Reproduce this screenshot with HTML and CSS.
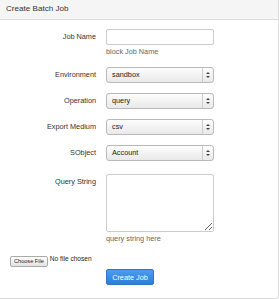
FILE: index.html
```html
<!DOCTYPE html>
<html lang="en">
<head>
  <meta charset="UTF-8">
  <title>Create Batch Job</title>
  <link rel="stylesheet" href="styles.css">
</head>
<body>
  <div class="panel">
    <div class="panel-heading">Create Batch Job</div>
    <form class="panel-body">
      <div class="form-group">
        <label for="jobName">Job Name</label>
        <div class="controls">
          <input type="text" id="jobName" class="field">
          <p class="help">block Job Name</p>
        </div>
      </div>

      <div class="form-group">
        <label>Environment</label>
        <div class="controls">
          <div class="select">sandbox<span class="arrows"></span></div>
        </div>
      </div>

      <div class="form-group">
        <label>Operation</label>
        <div class="controls">
          <div class="select">query<span class="arrows"></span></div>
        </div>
      </div>

      <div class="form-group">
        <label>Export Medium</label>
        <div class="controls">
          <div class="select">csv<span class="arrows"></span></div>
        </div>
      </div>

      <div class="form-group">
        <label>SObject</label>
        <div class="controls">
          <div class="select">Account<span class="arrows"></span></div>
        </div>
      </div>

      <div class="form-group query">
        <label for="query">Query String</label>
        <div class="controls">
          <textarea id="query" class="field area"></textarea>
          <p class="help">query string here</p>
        </div>
      </div>

      <div class="file-row">
        <span class="file-btn">Choose File</span>
        <span class="file-name">No file chosen</span>
      </div>

      <div class="form-group submit">
        <span></span>
        <div class="controls">
          <button type="button" class="btn-primary">Create Job</button>
        </div>
      </div>
    </form>
  </div>
</body>
</html>
```

FILE: styles.css
```css
body {
  margin: 0;
  font-family: "Liberation Sans", Arial, sans-serif;
  font-size: 7.3px;
  color: #333;
  background: #fff;
}

.panel {
  width: 279px;
  height: 299px;
  box-sizing: border-box;
  border: 1px solid #ddd;
  border-left: none;
  border-top: none;
  border-radius: 0 0 3px 0;
  background: #fff;
}

.panel-heading {
  height: 20px;
  line-height: 17px;
  padding: 0 6px;
  font-size: 8.1px;
  background: #f5f5f5;
  border-bottom: 1px solid #ddd;
  box-sizing: border-box;
}

.panel-body {
  margin: 0;
  padding-top: 9px;
}

.form-group {
  display: grid;
  grid-template-columns: 96px 108px;
  column-gap: 10px;
  margin-bottom: 10px;
}

.form-group label {
  text-align: right;
  line-height: 16px;
}

.query {
  margin-top: 13px;
}

.field {
  display: block;
  width: 108px;
  height: 16px;
  box-sizing: border-box;
  margin: 0;
  border: 1px solid #ccc;
  border-radius: 2px;
  background: #fff;
  font: inherit;
}

.area {
  height: 58px;
  resize: vertical;
}

.help {
  margin: 0;
  padding-top: 2px;
  line-height: 10px;
  color: #666;
}

.select {
  position: relative;
  width: 108px;
  height: 16px;
  box-sizing: border-box;
  padding-left: 5px;
  line-height: 14px;
  border: 1px solid #b9b9b9;
  border-radius: 3px;
  background: linear-gradient(#fdfdfd, #e9e9e9);
  color: #222;
}

.arrows {
  position: absolute;
  right: 0;
  top: 0;
  width: 10px;
  height: 14px;
  border-left: 1px solid #ccc;
}

.arrows::before,
.arrows::after {
  content: "";
  position: absolute;
  left: 3px;
  border-left: 2px solid transparent;
  border-right: 2px solid transparent;
}

.arrows::before {
  top: 4px;
  border-bottom: 2px solid #444;
}

.arrows::after {
  top: 8px;
  border-top: 2px solid #444;
}

.file-row {
  display: flex;
  align-items: flex-start;
  gap: 2px;
  padding-left: 10px;
  margin-top: 10px;
  height: 12px;
}

.file-btn {
  margin-top: 2px;
  height: 9px;
  line-height: 9px;
  padding: 0 3px;
  font-size: 5.6px;
  border: 1px solid #aaa;
  border-radius: 2px;
  background: linear-gradient(#fff, #e2e2e2);
  color: #222;
}

.file-name {
  line-height: 10px;
  font-size: 6.6px;
  color: #222;
}

.submit {
  margin-top: 3px;
}

.btn-primary {
  width: 48px;
  height: 16px;
  padding: 0;
  font: inherit;
  color: #fff;
  border: 1px solid #2f74c8;
  border-radius: 2px;
  background: linear-gradient(#4a9df0, #2d7ed8);
}
```
